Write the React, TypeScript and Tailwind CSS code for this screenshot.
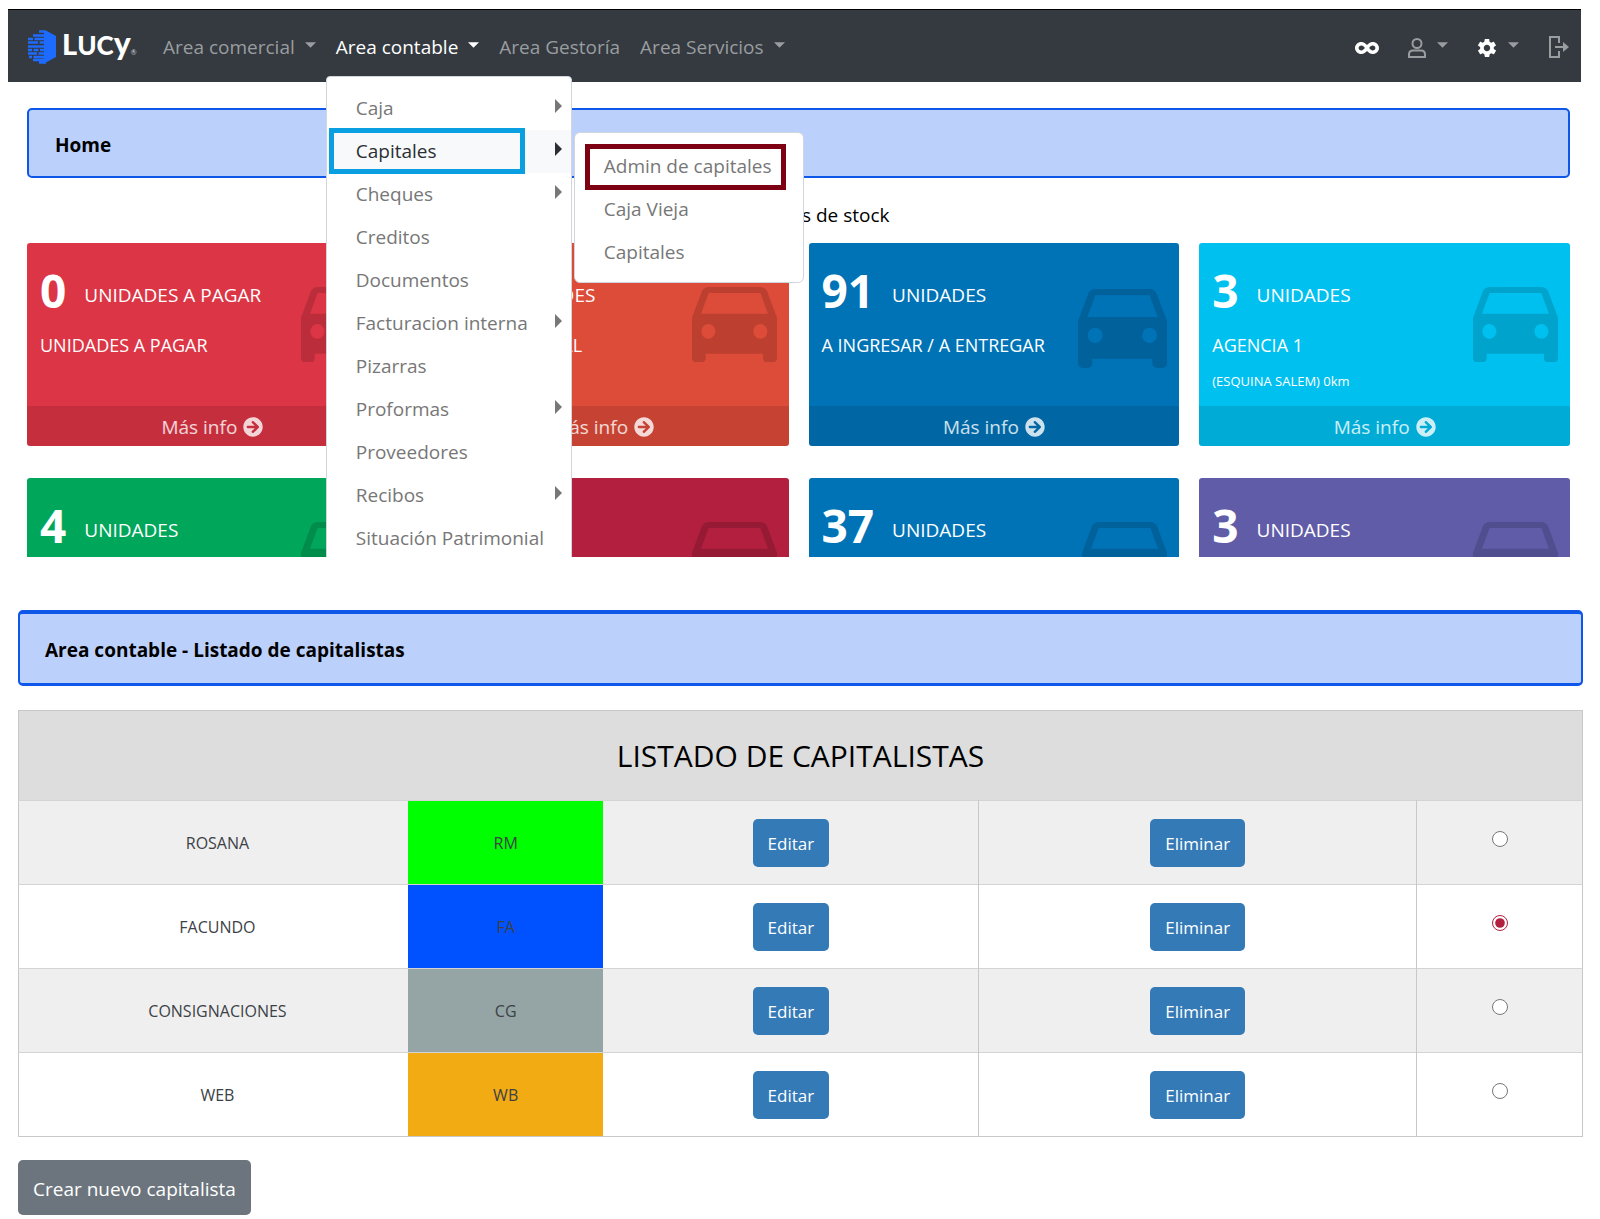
import { ReactNode } from "react";
import { FaArrowCircleRight, FaInfinity } from "react-icons/fa";
import { IoMdSettings } from "react-icons/io";

function Caret({ active = false }: { active?: boolean }) {
  return (
    <svg viewBox="0 0 12 6" className={active ? "mb-1 h-[6px] w-[11px] text-white" : "mb-1 h-[6px] w-[11px] text-[#9a9d9f]"} aria-hidden="true">
      <path d="M0 0h12L6 6z" fill="currentColor" />
    </svg>
  );
}

function Logo() {
  return (
    <a href="#" className="flex w-[106px] items-center gap-[6px] text-white" aria-label="Lucy">
      <svg viewBox="0 0 28 34" className="h-[34px] w-7 shrink-0" aria-hidden="true">
        <path d="M16 1l1-1 11 6v21L17 33l-1-1V1z" fill="#1d6bff" />
        <path
          d="M11 1.500h6M5 5.500h12M0 9h5M6.500 9h11M0 12.500h10M11.500 12.500h5M0 16.500h17M0 20h4M5.500 20h5M12 20h5M0 23.500h9M10.500 23.500h7M1 27h3M5.500 27h12M5 30h13M11 32.500h7"
          stroke="#1d6bff"
          strokeWidth="2.300"
        />
      </svg>
      <span className="flex items-baseline font-[Lato] leading-8 font-black">
        <span className="text-[29px]">L</span>
        <span className="text-[26px]">UC</span>
        <span className="text-[32px]">y</span>
        <span className="text-[7px] font-normal text-gray-300">®</span>
      </span>
    </a>
  );
}

const menuItems = [
  { label: "Caja", sub: true },
  { label: "Capitales", sub: true, active: true },
  { label: "Cheques", sub: true },
  { label: "Creditos" },
  { label: "Documentos" },
  { label: "Facturacion interna", sub: true },
  { label: "Pizarras" },
  { label: "Proformas", sub: true },
  { label: "Proveedores" },
  { label: "Recibos", sub: true },
  { label: "Situación Patrimonial" },
];

function Menu() {
  return (
    <div className="absolute top-full left-0 z-20 -ml-[10px] w-[246px] rounded-t border border-gray-300 bg-white pt-[10px] pb-4">
      {menuItems.map((item) => (
        <div key={item.label} className={item.active ? "relative h-[43px] bg-[#f8f9fa]" : "relative h-[43px]"}>
          <a
            href="#"
            className={
              item.active
                ? "flex h-full items-center justify-between pr-[9px] pl-[29px] text-[#2b2f33]"
                : "flex h-full items-center justify-between pr-[9px] pl-[29px] text-[#777]"
            }
          >
            <span className="whitespace-nowrap">{item.label}</span>
            {item.sub && (
              <svg viewBox="0 0 7 14" className="mb-[6px] h-[14px] w-[7px] shrink-0" aria-hidden="true">
                <path d="M0 0l7 7-7 7z" fill="currentColor" />
              </svg>
            )}
          </a>
          {item.active && (
            <>
              <div className="pointer-events-none absolute -top-[2px] left-[2px] h-[46px] w-[196px] border-[5px] border-[#0a9fe0]" />
              <SubMenu />
            </>
          )}
        </div>
      ))}
    </div>
  );
}

function SubMenu() {
  return (
    <div className="absolute top-[2px] left-full ml-[3px] w-[230px] rounded-md border border-gray-300 bg-white pt-3 pb-2 text-[#777]">
      {["Admin de capitales", "Caja Vieja", "Capitales"].map((label) => (
        <a key={label} href="#" className="flex h-[43px] items-center pl-[29px] whitespace-nowrap">
          {label}
        </a>
      ))}
      <div className="pointer-events-none absolute top-[11px] left-[10px] h-[46px] w-[201px] border-[5px] border-[#7d0013]" />
    </div>
  );
}

function Navbar() {
  return (
    <nav className="flex h-[73px] items-center border-t border-black bg-[#343a40] pt-[2px] pr-3 pl-5 text-[#9a9d9f]">
      <Logo />
      <div className="ml-[29px] flex items-center gap-5">
        <a href="#" className="flex items-center gap-[10px]">
          Area comercial <Caret />
        </a>
        <div className="relative flex h-[58px] items-center">
          <a href="#" className="flex items-center gap-[10px] text-white">
            Area contable <Caret active />
          </a>
          <Menu />
        </div>
        <a href="#">Area Gestoría</a>
        <a href="#" className="flex items-center gap-[10px]">
          Area Servicios <Caret />
        </a>
      </div>
      <div className="ml-auto flex items-center">
        <a href="#" aria-label="Panel">
          <FaInfinity className="mt-[2px] size-6 text-white" />
        </a>
        <a href="#" className="ml-[29px] flex items-center gap-[11px]" aria-label="Usuario">
          <svg viewBox="0 0 18 20" className="mt-[2px] h-5 w-[18px]" fill="none" stroke="currentColor" strokeWidth="2" aria-hidden="true">
            <circle cx="9" cy="5.500" r="4.500" />
            <path d="M1 19v-2.500q0-4 4-4h8q4 0 4 4V19z" />
          </svg>
          <Caret />
        </a>
        <a href="#" className="ml-7 flex items-center gap-[10px]" aria-label="Configuración">
          <IoMdSettings className="mt-[2px] size-[22px] text-white" />
          <Caret />
        </a>
        <a href="#" className="ml-[30px]" aria-label="Salir">
          <svg viewBox="0 0 20 22" className="h-[22px] w-5" fill="none" stroke="currentColor" strokeWidth="2" aria-hidden="true">
            <path d="M10 7V1H1v20h9v-6M6 11h10" />
            <path d="M14 6l6 5-6 5z" fill="currentColor" stroke="none" />
          </svg>
        </a>
      </div>
    </nav>
  );
}

function Car({ large = false }: { large?: boolean }) {
  return (
    <svg
      viewBox="0 0 255 226"
      className={
        large
          ? "absolute top-[46px] right-3 w-[89px] text-black/15"
          : "absolute top-[44px] right-3 w-[85px] text-black/15"
      }
      aria-hidden="true"
    >
      <path
        fill="currentColor"
        fillRule="evenodd"
        d="M51 0H204Q220 0 226 14L255 92V212Q255 226 241 226H227Q213 226 213 212V200H41V212Q41 226 27 226H14Q0 226 0 212V92L29 14Q35 0 51 0ZM50 18L27 80H228L205 18ZM49 111a21 22 0 1 0 .1 0ZM205 111a21 22 0 1 0 .1 0Z"
      />
    </svg>
  );
}

type Stat = { value: string; unit: string; line?: string; note?: string; color: string; large?: boolean };

const stats: Stat[] = [
  { value: "0", unit: "UNIDADES A PAGAR", line: "UNIDADES A PAGAR", color: "bg-[#dc3545]" },
  { value: "17", unit: "UNIDADES", line: "SALÓN PRINCIPAL", color: "bg-[#dd4b39]" },
  { value: "91", unit: "UNIDADES", line: "A INGRESAR / A ENTREGAR", color: "bg-[#0073b7]", large: true },
  { value: "3", unit: "UNIDADES", line: "AGENCIA 1", note: "(ESQUINA SALEM) 0km", color: "bg-[#00c0ef]" },
  { value: "4", unit: "UNIDADES", color: "bg-[#00a65a]" },
  { value: "5", unit: "UNIDADES", color: "bg-[#b21f3f]" },
  { value: "37", unit: "UNIDADES", color: "bg-[#0073b7]" },
  { value: "3", unit: "UNIDADES", color: "bg-[#605ca8]" },
];

function StatCard({ stat }: { stat: Stat }) {
  return (
    <article className={`${stat.color} relative flex h-[203px] flex-col overflow-hidden rounded-[3px] text-white`}>
      <div className="flex-1 px-[13px] pt-5">
        <div className="flex items-center gap-[18px]">
          <span className="text-[46px] leading-[54px] font-bold">{stat.value}</span>
          <span className="pt-[10px] leading-8">{stat.unit}</span>
        </div>
        {stat.line && <p className="mt-3 text-lg leading-8">{stat.line}</p>}
        {stat.note && <p className="mt-1 text-[13px] leading-8">{stat.note}</p>}
      </div>
      <Car large={stat.large} />
      <a href="#" className="flex h-10 shrink-0 items-center justify-center gap-[6px] bg-black/10 pt-[2px] text-white/80">
        Más info <FaArrowCircleRight className="size-5" />
      </a>
    </article>
  );
}

const rows = [
  { name: "ROSANA", code: "RM", color: "bg-[#00ff00]" },
  { name: "FACUNDO", code: "FA", color: "bg-[#0051ff]" },
  { name: "CONSIGNACIONES", code: "CG", color: "bg-[#95a5a5]" },
  { name: "WEB", code: "WB", color: "bg-[#f2ab12]" },
];

function ActionButton({ children }: { children: ReactNode }) {
  return (
    <button type="button" className="h-12 rounded-[5px] bg-[#337ab7] px-[15px] pt-[2px] align-middle text-[17px] text-white">
      {children}
    </button>
  );
}

function Capitalists() {
  return (
    <table className="mt-6 w-full table-fixed border-collapse border border-[#c8c8c8] text-center">
      <colgroup>
        <col className="w-[24.9%]" />
        <col className="w-[12.5%]" />
        <col className="w-[24%]" />
        <col className="w-[28%]" />
        <col />
      </colgroup>
      <thead>
        <tr className="h-[90px] bg-[#ddd]">
          <th colSpan={5} className="text-[30px] font-normal">
            LISTADO DE CAPITALISTAS
          </th>
        </tr>
      </thead>
      <tbody className="text-[#3c4146]">
        {rows.map((row) => (
          <tr key={row.code} className="h-[84px] border-t border-[#d4d4d4] odd:bg-[#efefef]">
            <td className="pl-2 text-base">{row.name}</td>
            <td className={`${row.color} text-base`}>{row.code}</td>
            <td>
              <ActionButton>Editar</ActionButton>
            </td>
            <td className="border-l border-[#c8c8c8]">
              <ActionButton>Eliminar</ActionButton>
            </td>
            <td className="border-l border-[#c8c8c8]">
              <input
                type="radio"
                name="capitalista"
                aria-label={row.name}
                defaultChecked={row.code === "FA"}
                className="mb-[10px] size-4 align-middle accent-[#b21f3f]"
              />
            </td>
          </tr>
        ))}
      </tbody>
    </table>
  );
}

export default function App() {
  return (
    <div className="min-h-screen bg-white font-['Open_Sans',sans-serif] text-[19px] text-black">
      <section className="mr-[19px] ml-2 h-[557px] overflow-hidden pt-[9px]">
        <Navbar />
        <div className="mr-[11px] ml-[19px] pt-[26px]">
          <h1 className="flex h-[70px] items-center rounded-[5px] border-2 border-[#0f57e8] bg-[#bbd0fa] px-[26px] pt-1 font-bold">
            Home
          </h1>
          <h2 className="mt-[21px] text-center leading-8 font-medium">Indicadores de stock</h2>
          <div className="mt-3 grid grid-cols-4 gap-x-5 gap-y-8">
            {stats.map((stat, i) => (
              <StatCard key={i} stat={stat} />
            ))}
          </div>
        </div>
      </section>
      <section className="mr-[17px] ml-[18px] pt-[53px]">
        <h1 className="flex h-[76px] items-center rounded-[5px] border-2 border-t-4 border-b-[3px] border-[#0f57e8] bg-[#bbd0fa] px-[25px] pt-1 font-bold">
          Area contable - Listado de capitalistas
        </h1>
        <Capitalists />
        <button type="button" className="mt-[23px] h-[55px] rounded-[5px] bg-[#6c757d] px-[15px] pt-1 text-white">
          Crear nuevo capitalista
        </button>
      </section>
    </div>
  );
}
